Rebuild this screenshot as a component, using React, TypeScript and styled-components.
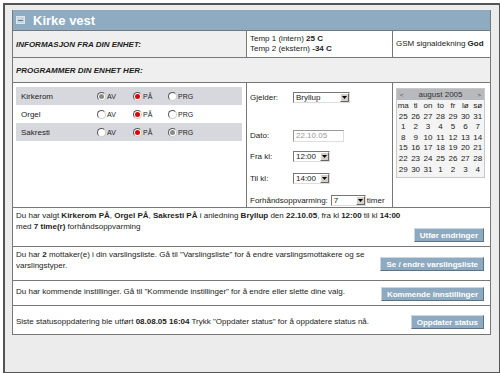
import React from "react";
import styled, { createGlobalStyle } from "styled-components";

const GlobalStyle = createGlobalStyle`
	html, body {
		margin: 0;
		padding: 0;
		background: #ffffff;
	}
	body {
		font-family: "Liberation Sans", Arial, sans-serif;
		font-size: 8px;
		color: #222;
	}
`;

type Choice = "AV" | "PÅ" | "PRG";

interface IUnit {
	name: string;
	active: Choice;
	faded?: Choice;
}

const units: IUnit[] = [
	{ name: "Kirkerom", active: "PÅ", faded: "AV" },
	{ name: "Orgel", active: "PÅ" },
	{ name: "Sakresti", active: "PÅ", faded: "PRG" },
];

const choices: Choice[] = ["AV", "PÅ", "PRG"];

const dayNames = ["ma", "ti", "on", "to", "fr", "lø", "sø"];
const weeks = [
	[25, 26, 27, 28, 29, 30, 31],
	[1, 2, 3, 4, 5, 6, 7],
	[8, 9, 10, 11, 12, 13, 14],
	[15, 16, 17, 18, 19, 20, 21],
	[22, 23, 24, 25, 26, 27, 28],
	[29, 30, 31, 1, 2, 3, 4],
];

const Radio = ({ state }: { state?: "on" | "faded" }) => (
	<RadioCircle>{state && <RadioDot $faded={state === "faded"} />}</RadioCircle>
);

const Select = ({ value, width }: { value: string; width: number }) => (
	<SelectBox style={{ width }}>
		<span>{value}</span>
		<SelectArrow>
			<svg width="5" height="3" viewBox="0 0 5 3">
				<path d="M0 0h5L2.5 3z" fill="#000" />
			</svg>
		</SelectArrow>
	</SelectBox>
);

const App = () => {
	return (
		<>
			<GlobalStyle />
			<Frame>
				<Panel>
					<Header>
						<HeaderIcon>
							<span />
						</HeaderIcon>
						Kirke vest
					</Header>
					<InfoRow>
						<GrayCell>
							<SectionTitle>INFORMASJON FRA DIN ENHET:</SectionTitle>
						</GrayCell>
						<WhiteCell>
							<div>
								Temp 1 (intern) <b>25 C</b>
							</div>
							<div>
								Temp 2 (ekstern) <b>-34 C</b>
							</div>
						</WhiteCell>
						<WhiteCell>
							<div>
								GSM signaldekning <b>God</b>
							</div>
						</WhiteCell>
					</InfoRow>
					<ProgRow>
						<SectionTitle>PROGRAMMER DIN ENHET HER:</SectionTitle>
					</ProgRow>
					<MainRow>
						<UnitCell>
							{units.map((u, i) => (
								<UnitRow key={u.name} $striped={i % 2 === 0}>
									<UnitName>{u.name}</UnitName>
									{choices.map((c) => (
										<Option key={c}>
											<Radio
												state={
													u.active === c
														? "on"
														: u.faded === c
														? "faded"
														: undefined
												}
											/>
											{c}
										</Option>
									))}
								</UnitRow>
							))}
						</UnitCell>
						<FormCell>
							<FormRow $gap={25}>
								<FormLabel>Gjelder:</FormLabel>
								<Select value="Bryllup" width={57} />
							</FormRow>
							<FormRow $gap={8}>
								<FormLabel>Dato:</FormLabel>
								<DateInput>22.10.05</DateInput>
							</FormRow>
							<FormRow $gap={9}>
								<FormLabel>Fra kl:</FormLabel>
								<Select value="12:00" width={37} />
							</FormRow>
							<FormRow $gap={9}>
								<FormLabel>Til kl:</FormLabel>
								<Select value="14:00" width={37} />
							</FormRow>
							<FormRow $gap={0}>
								<PreheatLabel>Forhåndsoppvarming:</PreheatLabel>
								<Select value="7" width={35} />
								<Unit>timer</Unit>
							</FormRow>
						</FormCell>
						<CalendarCell>
							<Calendar>
								<CalHead>
									<CalNav>&lt;</CalNav>
									<span>august 2005</span>
									<CalNav>&gt;</CalNav>
								</CalHead>
								<CalGrid>
									{dayNames.map((d) => (
										<CalDay key={d}>{d}</CalDay>
									))}
									{weeks.flat().map((d, i) => (
										<CalDay key={i}>{d}</CalDay>
									))}
								</CalGrid>
							</Calendar>
						</CalendarCell>
					</MainRow>
					<MessageRow $height={39}>
						<MessageText $top={2}>
							Du har valgt <b>Kirkerom PÅ</b>, <b>Orgel PÅ</b>,{" "}
							<b>Sakresti PÅ</b> i anledning <b>Bryllup</b> den{" "}
							<b>22.10.05</b>, fra kl <b>12:00</b> til kl <b>14:00</b>
							<br />
							med <b>7 time(r)</b> forhåndsoppvarming
						</MessageText>
						<ActionButton $top={20}>Utfør endringer</ActionButton>
					</MessageRow>
					<MessageRow $height={34}>
						<MessageText $top={2}>
							Du har <b>2</b> mottaker(e) i din varslingsliste. Gå til
							"Varslingsliste" for å endre varslingsmottakere og se
							<br />
							varslingstyper.
						</MessageText>
						<ActionButton $top={10}>Se / endre varslingsliste</ActionButton>
					</MessageRow>
					<MessageRow $height={25}>
						<MessageText $top={5}>
							Du har kommende instillinger. Gå til "Kommende instillinger" for
							å endre eller slette dine valg.
						</MessageText>
						<ActionButton $top={6}>Kommende innstillinger</ActionButton>
					</MessageRow>
					<MessageRow $height={28}>
						<MessageText $top={10}>
							Siste statusoppdatering ble utført <b>08.08.05 16:04</b> Trykk
							"Oppdater status" for å oppdatere status nå.
						</MessageText>
						<ActionButton $top={9}>Oppdater status</ActionButton>
					</MessageRow>
				</Panel>
			</Frame>
		</>
	);
};

export default App;

const Frame = styled.div`
	margin: 3px;
	height: 362px;
	border: 2px solid #555;
	background: #ececec;
	padding: 5px 4px 0 7px;
	box-sizing: content-box;
	width: 483px;
`;

const Panel = styled.div`
	width: 477px;
	border: 1px solid #777;
	border-top: none;
	background: #fff;
`;

const Header = styled.div`
	display: flex;
	align-items: center;
	gap: 8px;
	height: 21px;
	padding-left: 3px;
	background: #8eabc1;
	color: #fff;
	font-size: 13px;
	font-weight: bold;
	border-bottom: 1px solid #777;
	box-sizing: border-box;
`;

const HeaderIcon = styled.div`
	width: 7px;
	height: 6px;
	background: #c7d5df;
	border: 1px solid #dfe7ee;
	display: flex;
	align-items: center;
	justify-content: center;

	span {
		width: 5px;
		height: 1px;
		background: #5b7a90;
	}
`;

const InfoRow = styled.div`
	display: grid;
	grid-template-columns: 234px 145px 1fr;
	height: 26px;
	border-bottom: 1px solid #777;
`;

const GrayCell = styled.div`
	background: #efefef;
	display: flex;
	align-items: center;
	padding-left: 3px;
	border-right: 1px solid #777;
`;

const WhiteCell = styled.div`
	display: flex;
	flex-direction: column;
	justify-content: center;
	padding-left: 3px;
	line-height: 10px;

	& + & {
		border-left: 1px solid #777;
	}
`;

const SectionTitle = styled.span`
	font-weight: bold;
	font-style: italic;
	font-size: 8px;
`;

const ProgRow = styled.div`
	height: 24px;
	background: #efefef;
	display: flex;
	align-items: center;
	padding-left: 3px;
	border-bottom: 1px solid #777;
`;

const MainRow = styled.div`
	display: grid;
	grid-template-columns: 234px 145px 1fr;
	height: 124px;
	border-bottom: 1px solid #777;
`;

const UnitCell = styled.div`
	padding: 4px 4px 0 3px;
	border-right: 1px solid #777;
`;

const UnitRow = styled.div<{ $striped: boolean }>`
	display: grid;
	grid-template-columns: 76px 36px 35px 1fr;
	align-items: center;
	height: 18px;
	padding-left: 5px;
	background: ${(p) => (p.$striped ? "#d6d8de" : "transparent")};
`;

const UnitName = styled.span`
	font-size: 8px;
`;

const Option = styled.span`
	display: flex;
	align-items: center;
	gap: 1px;
	font-size: 7px;
`;

const RadioCircle = styled.span`
	width: 9px;
	height: 9px;
	box-sizing: border-box;
	border-radius: 50%;
	border: 1px solid #555;
	border-right-color: #ccc;
	border-bottom-color: #ccc;
	background: #fff;
	display: flex;
	align-items: center;
	justify-content: center;
`;

const RadioDot = styled.span<{ $faded: boolean }>`
	width: 5px;
	height: 5px;
	border-radius: 50%;
	background: ${(p) => (p.$faded ? "#8a8a8a" : "#e00000")};
`;

const FormCell = styled.div`
	display: flex;
	flex-direction: column;
	padding: 8px 0 0 3px;
`;

const FormRow = styled.div<{ $gap: number }>`
	display: flex;
	align-items: center;
	height: 13px;
	margin-bottom: ${(p) => p.$gap}px;
`;

const FormLabel = styled.span`
	width: 43px;
`;

const PreheatLabel = styled.span`
	margin-right: 3px;
`;

const Unit = styled.span`
	margin-left: 1px;
`;

const SelectBox = styled.div`
	height: 11px;
	box-sizing: border-box;
	display: flex;
	align-items: stretch;
	justify-content: space-between;
	background: #fff;
	border: 1px solid #777;
	border-right-color: #ddd;
	border-bottom-color: #ddd;
	font-size: 8px;
	line-height: 9px;

	span {
		padding-left: 2px;
	}
`;

const SelectArrow = styled.div`
	width: 9px;
	background: #d4d0c8;
	border: 1px solid #fff;
	border-right-color: #666;
	border-bottom-color: #666;
	box-sizing: border-box;
	display: flex;
	align-items: center;
	justify-content: center;
`;

const DateInput = styled.div`
	width: 51px;
	height: 12px;
	box-sizing: border-box;
	border: 1px solid #999;
	border-right-color: #ddd;
	border-bottom-color: #ddd;
	color: #999;
	padding-left: 2px;
	line-height: 10px;
`;

const CalendarCell = styled.div`
	border-left: 1px solid #777;
	padding: 5px 0 0 3px;
`;

const Calendar = styled.div`
	width: 87px;
	border: 1px solid #c8c8c8;
	background: #f4f4f4;
`;

const CalHead = styled.div`
	display: flex;
	justify-content: space-between;
	align-items: center;
	height: 11px;
	background: #b7b9bd;
	padding: 0 3px;
	color: #333;
	font-size: 8px;
`;

const CalNav = styled.span`
	font-size: 6px;
	color: #444;
`;

const CalGrid = styled.div`
	display: grid;
	grid-template-columns: repeat(7, 1fr);
	grid-auto-rows: 10.6px;
	padding: 1px 0 2px;
`;

const CalDay = styled.span`
	text-align: center;
	font-size: 8px;
	line-height: 10.6px;
	color: #222;
`;

const MessageRow = styled.div<{ $height: number }>`
	display: flex;
	justify-content: space-between;
	align-items: flex-start;
	height: ${(p) => p.$height}px;
	box-sizing: border-box;
	padding: 0 6px 0 3px;
	border-bottom: 1px solid #777;

	&:last-child {
		border-bottom: none;
	}
`;

const MessageText = styled.div<{ $top: number }>`
	line-height: 11px;
	padding-top: ${(p) => p.$top}px;
`;

const ActionButton = styled.button<{ $top: number }>`
	margin-top: ${(p) => p.$top}px;
	flex-shrink: 0;
	height: 14px;
	padding: 0 5px;
	background: #8eaac0;
	color: #fff;
	font-family: "Liberation Sans", Arial, sans-serif;
	font-size: 8px;
	font-weight: bold;
	border: 1px solid #c9d7e2;
	border-right-color: #5d7385;
	border-bottom-color: #5d7385;
	cursor: pointer;
`;
